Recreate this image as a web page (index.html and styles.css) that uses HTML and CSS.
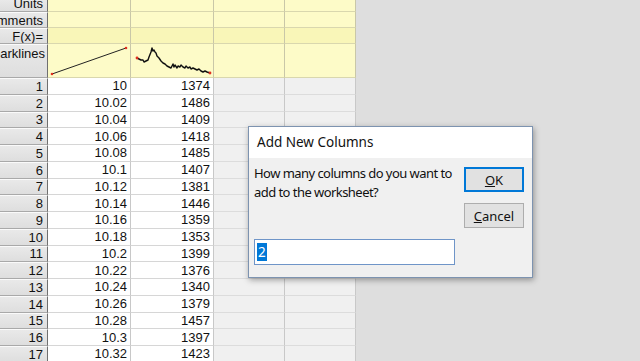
FILE: index.html
```html
<!DOCTYPE html>
<html>
<head>
<meta charset="utf-8">
<link rel="stylesheet" href="styles.css">
</head>
<body>
<div class="app">
  <div class="sheet">
    <div class="grid">
      <div class="rh lab r-units"><span>Units</span></div>
      <div class="c y r-units"></div><div class="c y r-units"></div><div class="c y r-units"></div><div class="c y r-units"></div>
      <div class="rh lab"><span>Comments</span></div>
      <div class="c y"></div><div class="c y"></div><div class="c y"></div><div class="c y"></div>
      <div class="rh lab"><span>F(x)=</span></div>
      <div class="c y fx"></div><div class="c y fx"></div><div class="c y fx"></div><div class="c y fx"></div>
      <div class="rh lab top"><span>Sparklines</span></div>
      <div class="c y spark">
        <svg width="83" height="33" viewBox="0 0 83 33">
          <polyline points="4,30 78,4" fill="none" stroke="#222" stroke-width="1"/>
          <circle cx="4" cy="30" r="1.3" fill="#e03020"/>
          <circle cx="78" cy="4" r="1.3" fill="#e03020"/>
        </svg>
      </div>
      <div class="c y spark">
        <svg width="82" height="33" viewBox="0 0 82 33">
          <polyline fill="none" stroke="#111" stroke-width="1.4" stroke-linejoin="round" points="6,14 8,15 10,16 12,16 13,18 15,17 17,16 18,13 20,8 21,4 22,7 23,6 24,8 25,9 26,12 28,14 30,17 32,19 34,20 36,22 38,23 40,24 41,22 42,20 43,23 44,21 46,24 47,22 49,23 50,21 52,23 54,24 55,22 57,24 59,23 60,25 62,24 64,25 66,26 68,25 70,27 72,28 74,27 76,28 79,29"/>
          <circle cx="6" cy="14" r="1.4" fill="#e03020"/>
          <circle cx="79" cy="29" r="1.4" fill="#e03020"/>
        </svg>
      </div>
      <div class="c y"></div><div class="c y"></div>

      <div class="rh">1</div><div class="c n">10</div><div class="c n">1374</div><div class="c e"></div><div class="c e"></div>
      <div class="rh">2</div><div class="c n">10.02</div><div class="c n">1486</div><div class="c e"></div><div class="c e"></div>
      <div class="rh">3</div><div class="c n">10.04</div><div class="c n">1409</div><div class="c e"></div><div class="c e"></div>
      <div class="rh">4</div><div class="c n">10.06</div><div class="c n">1418</div><div class="c e"></div><div class="c e"></div>
      <div class="rh">5</div><div class="c n">10.08</div><div class="c n">1485</div><div class="c e"></div><div class="c e"></div>
      <div class="rh">6</div><div class="c n">10.1</div><div class="c n">1407</div><div class="c e"></div><div class="c e"></div>
      <div class="rh">7</div><div class="c n">10.12</div><div class="c n">1381</div><div class="c e"></div><div class="c e"></div>
      <div class="rh">8</div><div class="c n">10.14</div><div class="c n">1446</div><div class="c e"></div><div class="c e"></div>
      <div class="rh">9</div><div class="c n">10.16</div><div class="c n">1359</div><div class="c e"></div><div class="c e"></div>
      <div class="rh">10</div><div class="c n">10.18</div><div class="c n">1353</div><div class="c e"></div><div class="c e"></div>
      <div class="rh">11</div><div class="c n">10.2</div><div class="c n">1399</div><div class="c e"></div><div class="c e"></div>
      <div class="rh">12</div><div class="c n">10.22</div><div class="c n">1376</div><div class="c e"></div><div class="c e"></div>
      <div class="rh">13</div><div class="c n">10.24</div><div class="c n">1340</div><div class="c e"></div><div class="c e"></div>
      <div class="rh">14</div><div class="c n">10.26</div><div class="c n">1379</div><div class="c e"></div><div class="c e"></div>
      <div class="rh">15</div><div class="c n">10.28</div><div class="c n">1457</div><div class="c e"></div><div class="c e"></div>
      <div class="rh">16</div><div class="c n">10.3</div><div class="c n">1397</div><div class="c e"></div><div class="c e"></div>
      <div class="rh">17</div><div class="c n">10.32</div><div class="c n">1423</div><div class="c e"></div><div class="c e"></div>
    </div>
  </div>

  <div class="dialog">
    <div class="dtitle">Add New Columns</div>
    <div class="dbody">
      <div class="dleft">
        <p class="prompt">How many columns do you want to add to the worksheet?</p>
        <div class="input"><span class="sel">2</span></div>
      </div>
      <div class="dright">
        <button class="btn default"><u>O</u>K</button>
        <button class="btn"><u>C</u>ancel</button>
      </div>
    </div>
  </div>
</div>
</body>
</html>
```

FILE: styles.css
```css
* { box-sizing: border-box; }
html, body { margin: 0; padding: 0; }
body {
  width: 640px;
  height: 361px;
  overflow: hidden;
  background: #dedede;
  font-family: "Liberation Sans", Arial, sans-serif;
}
.app {
  position: relative;
  width: 640px;
  height: 361px;
  overflow: hidden;
}
.sheet {
  width: 356px;
  height: 361px;
  overflow: hidden;
}
.grid {
  display: grid;
  grid-template-columns: 48px 83px 83px 71px 71px;
  grid-template-rows: 12px 16px 16px 34px;
  grid-auto-rows: 16.75px;
  font-size: 13px;
  color: #111;
}
.c {
  border-right: 1px solid #c8c8c8;
  border-bottom: 1px solid #d6d6d6;
  background: #fff;
  overflow: hidden;
}
.c.y {
  background: #fdfbc8;
  border-right-color: #c9c7a8;
  border-bottom-color: #d9d7ae;
}
.c.fx { background: #f9f6b8; }
.c.n {
  display: flex;
  justify-content: flex-end;
  align-items: center;
  padding-right: 3px;
  line-height: 1;
}
.c.e { background: #f0f0f0; border-bottom-color: #dcdcdc; }
.rh {
  background: linear-gradient(#e9e9e9, #dedede);
  border-right: 1px solid #6f6f6f;
  border-bottom: 1px solid #a9a9a9;
  border-top: 1px solid #fafafa;
  display: flex;
  justify-content: flex-end;
  align-items: center;
  padding-right: 4px;
  line-height: 1;
  overflow: hidden;
  white-space: nowrap;
}
.rh.lab span { flex: none; }
.rh.r-units { align-items: flex-end; border-top: 0; }
.rh.r-units span { margin-bottom: 1px; }
.rh.lab.top { align-items: flex-start; padding-top: 2px; padding-right: 2px; }
.c.spark svg { display: block; }

.dialog {
  position: absolute;
  left: 248px;
  top: 126px;
  width: 285px;
  height: 152px;
  background: #f0f0f0;
  border: 1px solid #7d93b0;
  box-shadow: 1px 2px 6px rgba(0,0,0,0.35);
  font-family: "Noto Sans", "Open Sans", sans-serif;
  color: #111;
}
.dtitle {
  height: 31px;
  background: #fff;
  font-size: 13.5px;
  padding: 6px 0 0 8px;
}
.dbody {
  display: flex;
  padding: 6px 0 0 5px;
}
.dleft { width: 202px; }
.prompt {
  margin: 0;
  font-size: 13px;
  line-height: 19px;
  letter-spacing: -0.55px;
  width: 202px;
}
.input {
  margin-top: 37px;
  width: 201px;
  height: 26px;
  background: #fff;
  border: 1px solid #6f95c8;
  padding: 3px 2px;
  font-size: 13.5px;
  line-height: 18px;
}
.sel { background: #0078d7; color: #fff; padding: 0 1px; }
.dright {
  display: flex;
  flex-direction: column;
  gap: 11px;
  margin-left: 8px;
  padding-top: 3px;
}
.btn {
  width: 60px;
  height: 25px;
  background: #e1e1e1;
  border: 1px solid #adadad;
  font-family: "Noto Sans", "Open Sans", sans-serif;
  font-size: 13px;
  color: #111;
  padding: 0;
}
.btn.default { border: 2px solid #0078d7; }
```
